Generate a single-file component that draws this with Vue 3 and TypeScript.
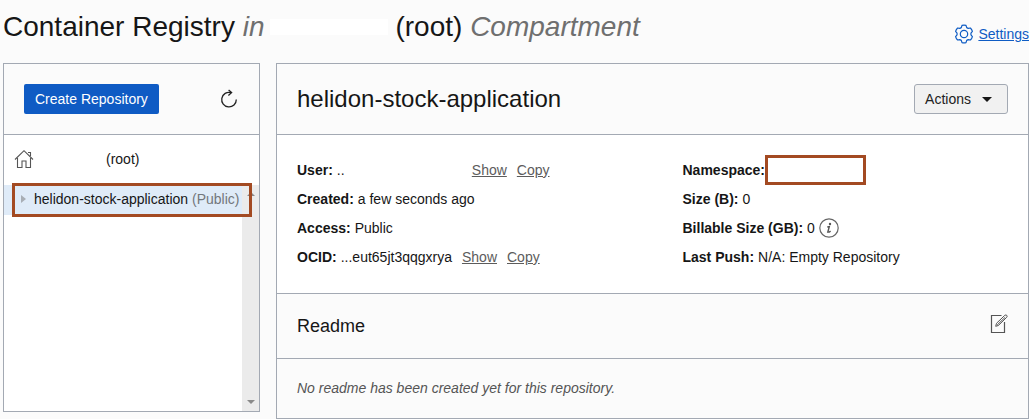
<script setup lang="ts">
import { ref } from 'vue'

interface Field {
  label: string
  value: string
  links?: boolean
  spaced?: boolean
  info?: boolean
  boxed?: boolean
}

const repository = ref('helidon-stock-application')

const leftFields: Field[] = [
  { label: 'User:', value: '..', links: true, spaced: true },
  { label: 'Created:', value: 'a few seconds ago' },
  { label: 'Access:', value: 'Public' },
  { label: 'OCID:', value: '...eut65jt3qqgxrya', links: true },
]

const rightFields: Field[] = [
  { label: 'Namespace:', value: '', boxed: true },
  { label: 'Size (B):', value: '0' },
  { label: 'Billable Size (GB):', value: '0', info: true },
  { label: 'Last Push:', value: 'N/A: Empty Repository' },
]

const columns = [leftFields, rightFields]
</script>

<template>
  <div class="page">
    <header class="top">
      <h1>
        <span>Container Registry <em>in</em></span>
        <span class="blank"></span>
        <span>(root) <em>Compartment</em></span>
      </h1>
      <a class="settings" href="#">
        <svg width="20" height="20" viewBox="0 0 20 20" fill="none" stroke="currentColor" stroke-width="1.2" stroke-linejoin="round" aria-hidden="true">
          <path d="M8 1.4Q10 .9 12 1.4L12.700 3.600 14.200 4.400 16.400 4Q17.900 5.400 18.400 7.400L16.950 9.150V10.850L18.400 12.600Q17.900 14.600 16.400 16L14.200 15.600 12.700 16.400 12 18.600Q10 19.100 8 18.600L7.300 16.400 5.800 15.600 3.600 16Q2.100 14.600 1.600 12.600L3.050 10.850V9.150L1.600 7.400Q2.100 5.400 3.600 4L5.800 4.400 7.300 3.600z" />
          <circle cx="10" cy="10" r="3.700" />
        </svg>
        <span>Settings</span>
      </a>
    </header>

    <div class="panels">
      <aside class="panel side">
        <div class="bar">
          <button class="primary" type="button">Create Repository</button>
          <button class="icon" type="button" aria-label="Refresh">
            <svg width="18" height="20" viewBox="0 0 18 20" fill="none" stroke="#222" stroke-width="1.3" aria-hidden="true">
              <path d="M16.300 10.500A7.300 7.300 0 1 1 11 3.600" />
              <path d="M8.600 1l3 2.600-3.200 2.800" />
            </svg>
          </button>
        </div>
        <div class="root">
          <svg width="20" height="20" viewBox="0 0 20 20" fill="none" stroke="#555" stroke-width="1.100" aria-hidden="true">
            <path d="M1 10.500L10 1.700l9 8.800M3.500 9v9.500h4.500v-6.500h4v6.500h4.500V9M14 3.500h2.500v3.500" />
          </svg>
          <span>(root)</span>
        </div>
        <div class="tree">
          <div class="nodes">
            <div class="node">
              <i class="caret"></i>
              <span>{{ repository }} <small>(Public)</small></span>
            </div>
          </div>
          <div class="track">
            <i class="up"></i>
            <i class="down"></i>
          </div>
          <div class="marker"></div>
        </div>
      </aside>

      <main class="panel">
        <div class="bar">
          <h2>{{ repository }}</h2>
          <button class="actions" type="button">Actions <i class="drop"></i></button>
        </div>
        <div class="details">
          <dl v-for="(fields, c) in columns" :key="c">
            <div v-for="f in fields" :key="f.label" class="field">
              <dt>{{ f.label }}</dt>
              <dd v-if="f.boxed" class="boxed"></dd>
              <dd v-else :class="{ spaced: f.spaced }">{{ f.value }}</dd>
              <dd v-if="f.links" class="links"><a href="#">Show</a><a href="#">Copy</a></dd>
              <dd v-if="f.info" class="info">
                <svg width="20" height="20" viewBox="0 0 20 20" fill="none" stroke="#666" aria-hidden="true">
                  <circle cx="10" cy="10" r="9.200" stroke-width="1.200" />
                  <circle cx="11" cy="6" r="1.200" fill="#555" stroke="none" />
                  <path d="M8.300 9l2-.4-1.500 5.500h1.500l1.300-1" stroke="#555" stroke-width="1.400" />
                </svg>
              </dd>
            </div>
          </dl>
        </div>
        <div class="readme">
          <h3>Readme</h3>
          <button class="icon" type="button" aria-label="Edit readme">
            <svg width="18" height="20" viewBox="0 0 18 20" fill="none" stroke="#555" aria-hidden="true">
              <path d="M11.500 1.500h-10v17h13V8" stroke-width="1.200" />
              <path d="M5.700 12.300l.8-3 8.300-8q1.200-.7 2 .1t0 1.800L8.400 11.500zM7.200 11l7.900-7.700" />
            </svg>
          </button>
        </div>
        <p class="empty">No readme has been created yet for this repository.</p>
      </main>
    </div>
  </div>
</template>

<style>
body {
  margin: 0;
  background: #fbfbfb;
}
</style>

<style scoped>
.page {
  box-sizing: border-box;
  min-height: 100vh;
  padding: 11px 0 0 3px;
  overflow: hidden;
  background: #fbfbfb;
  color: #161616;
  font: 14px/20px "Liberation Sans", Arial, sans-serif;
}
h1, h2, h3, p, dl, dd {
  margin: 0;
}
h1, h2, h3 {
  font-weight: 400;
}
button {
  font: inherit;
}
svg {
  display: block;
}
.top {
  display: flex;
  justify-content: space-between;
  align-items: flex-end;
  height: 33px;
  margin-bottom: 19px;
}
h1 {
  align-self: flex-start;
  display: flex;
  align-items: center;
  font-size: 28px;
  line-height: 32px;
  white-space: nowrap;
}
h1 em {
  color: #6f6f6f;
}
.blank {
  width: 118px;
  height: 16px;
  margin: 0 7px 0 6px;
  background: #fff;
}
.settings {
  display: flex;
  align-items: center;
  gap: 4px;
  color: #0f5cc4;
  text-decoration: none;
}
.settings span {
  text-decoration: underline;
}
.panels {
  display: flex;
  align-items: flex-start;
  gap: 16px;
}
.panel {
  flex: 1;
  min-width: 0;
  border: 1px solid #a3a9b3;
}
.side {
  flex: 0 0 255px;
}
.bar {
  display: flex;
  justify-content: space-between;
  align-items: center;
  padding: 20px;
  border-bottom: 1px solid #a3a9b3;
}
.primary {
  height: 30px;
  padding: 0 11px;
  border: 0;
  border-radius: 2px;
  background: #0f5bc4;
  color: #fff;
}
.icon {
  padding: 0;
  border: 0;
  background: none;
}
.side .icon {
  margin-right: 1px;
}
.root {
  display: flex;
  align-items: center;
  gap: 72px;
  height: 50px;
  padding: 0 10px 2px;
  box-sizing: border-box;
  background: #fff;
}
.tree {
  position: relative;
  display: flex;
  min-height: 226px;
  background: #fff;
}
.nodes {
  flex: 1;
}
.node {
  display: flex;
  align-items: center;
  gap: 8px;
  box-sizing: border-box;
  height: 30px;
  padding: 0 0 2px 17px;
  background: #dfebf8;
  white-space: nowrap;
}
.node small {
  font-size: 14px;
  color: #73777b;
}
.caret {
  border: solid transparent;
  border-width: 4px 0 4px 5px;
  border-left-color: #a8aeb5;
}
.track {
  display: flex;
  flex-direction: column;
  justify-content: space-between;
  align-items: center;
  width: 17px;
  padding: 7px 0;
  box-sizing: border-box;
  background: #ebebeb;
}
.up, .down {
  border: solid transparent;
}
.up {
  border-width: 0 4px 4px;
  border-bottom-color: #8a8a8a;
}
.down {
  border-width: 4px 4px 0;
  border-top-color: #8a8a8a;
}
.marker {
  position: absolute;
  top: -2px;
  right: 7px;
  left: 8px;
  height: 28px;
  border: 3px solid #a34a22;
}
h2 {
  font-size: 24px;
  line-height: 30px;
}
.actions {
  display: flex;
  align-items: center;
  gap: 11px;
  height: 30px;
  padding: 0 15px 0 10px;
  border: 1px solid #a3a9b3;
  border-radius: 3px;
  background: #f1f1f1;
  color: #222;
}
.drop {
  border: solid transparent;
  border-width: 5px 5px 0;
  border-top-color: #161616;
}
.details {
  display: grid;
  grid-template-columns: 1fr 1fr;
  gap: 60px;
  padding: 20px 20px 22px;
  border-bottom: 1px solid #a3a9b3;
  background: #fff;
}
.field {
  display: flex;
  align-items: center;
  gap: 4px;
  height: 29px;
  white-space: nowrap;
}
dt {
  font-weight: 700;
}
.spaced {
  min-width: 125px;
}
.links {
  display: flex;
  gap: 10px;
  margin-left: 6px;
}
.links a {
  color: #5c5c5c;
}
.boxed {
  width: 95px;
  height: 24px;
  margin-left: -4px;
  border: 3px solid #a34a22;
}
.readme {
  display: flex;
  justify-content: space-between;
  align-items: center;
  height: 64px;
  padding: 0 20px;
  border-bottom: 1px solid #a3a9b3;
}
.readme .icon {
  padding-bottom: 4px;
}
h3 {
  font-size: 18px;
  line-height: 24px;
}
.empty {
  padding: 19px 20px 20px;
  color: #555;
  font-style: italic;
}
</style>
